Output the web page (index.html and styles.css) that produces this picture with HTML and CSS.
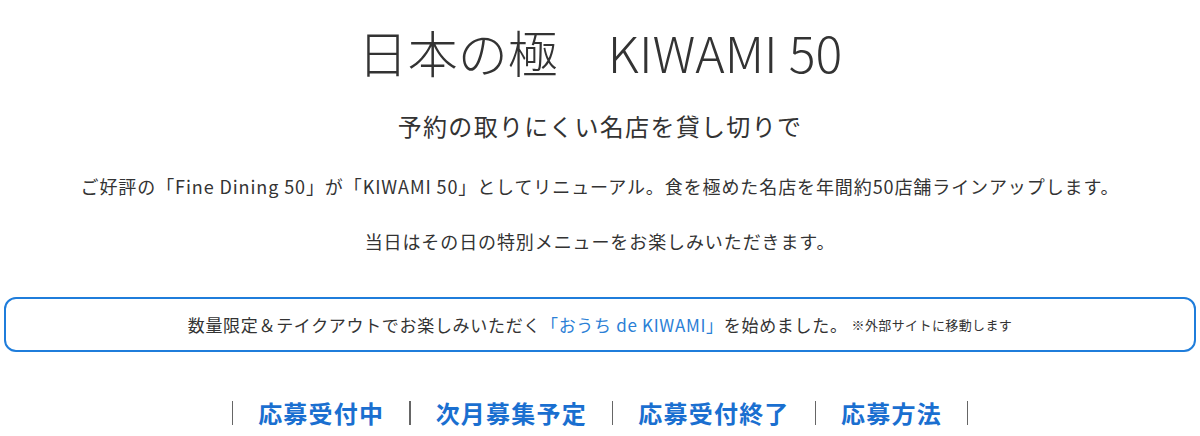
FILE: index.html
```html
<!DOCTYPE html>
<html lang="ja">
<head>
<meta charset="utf-8">
<link rel="stylesheet" href="styles.css">
</head>
<body>
<div class="page">
  <h1 class="title">日本の極　KIWAMI 50</h1>
  <p class="lead">予約の取りにくい名店を貸し切りで</p>
  <p class="text">ご好評の「Fine Dining 50」が「KIWAMI 50」としてリニューアル。食を極めた名店を年間約50店舗ラインアップします。</p>
  <p class="text">当日はその日の特別メニューをお楽しみいただきます。</p>
  <div class="notice">
    <span>数量限定＆テイクアウトでお楽しみいただく<a class="link" href="#">「おうち de KIWAMI」</a>を始めました。</span><span class="small">※外部サイトに移動します</span>
  </div>
  <nav class="tabs">
    <span class="sep"></span>
    <a class="tab" href="#">応募受付中</a>
    <span class="sep"></span>
    <a class="tab" href="#">次月募集予定</a>
    <span class="sep"></span>
    <a class="tab" href="#">応募受付終了</a>
    <span class="sep"></span>
    <a class="tab" href="#">応募方法</a>
    <span class="sep"></span>
  </nav>
</div>
</body>
</html>
```
FILE: styles.css
```css
html, body {
  margin: 0;
  padding: 0;
  background: #fff;
}
body {
  font-family: "Noto Sans CJK JP", "Noto Sans", sans-serif;
  color: #333;
}
.page {
  padding: 0 4px;
  display: flex;
  flex-direction: column;
  align-items: center;
}
.title {
  margin: 19px 0 0;
  font-size: 50px;
  font-weight: 300;
  line-height: 64px;
  letter-spacing: 0;
}
.lead {
  margin: 25px 0 0;
  font-size: 24px;
  font-weight: 400;
  line-height: 36px;
  letter-spacing: 0.055em;
}
.text {
  margin: 0;
  font-size: 18px;
  line-height: 28px;
  letter-spacing: 0.05em;
}
.lead + .text {
  margin-top: 28px;
}
.text + .text {
  margin-top: 27px;
}
.notice {
  align-self: stretch;
  margin-top: 42px;
  height: 51px;
  border: 2px solid #1f7ddb;
  border-radius: 12px;
  display: flex;
  align-items: center;
  justify-content: center;
  font-size: 17px;
  letter-spacing: 0.04em;
}
.link {
  color: #2b80d6;
  text-decoration: none;
}
.small {
  font-size: 13px;
  margin-left: 4px;
  letter-spacing: 0.03em;
}
.tabs {
  margin-top: 45px;
  display: flex;
  align-items: center;
  gap: 25px;
}
.tab {
  color: #1a6fd0;
  font-weight: 700;
  font-size: 24px;
  line-height: 32px;
  letter-spacing: 0.05em;
  text-decoration: none;
}
.sep {
  width: 1.5px;
  height: 24px;
  background: #666;
}
```
